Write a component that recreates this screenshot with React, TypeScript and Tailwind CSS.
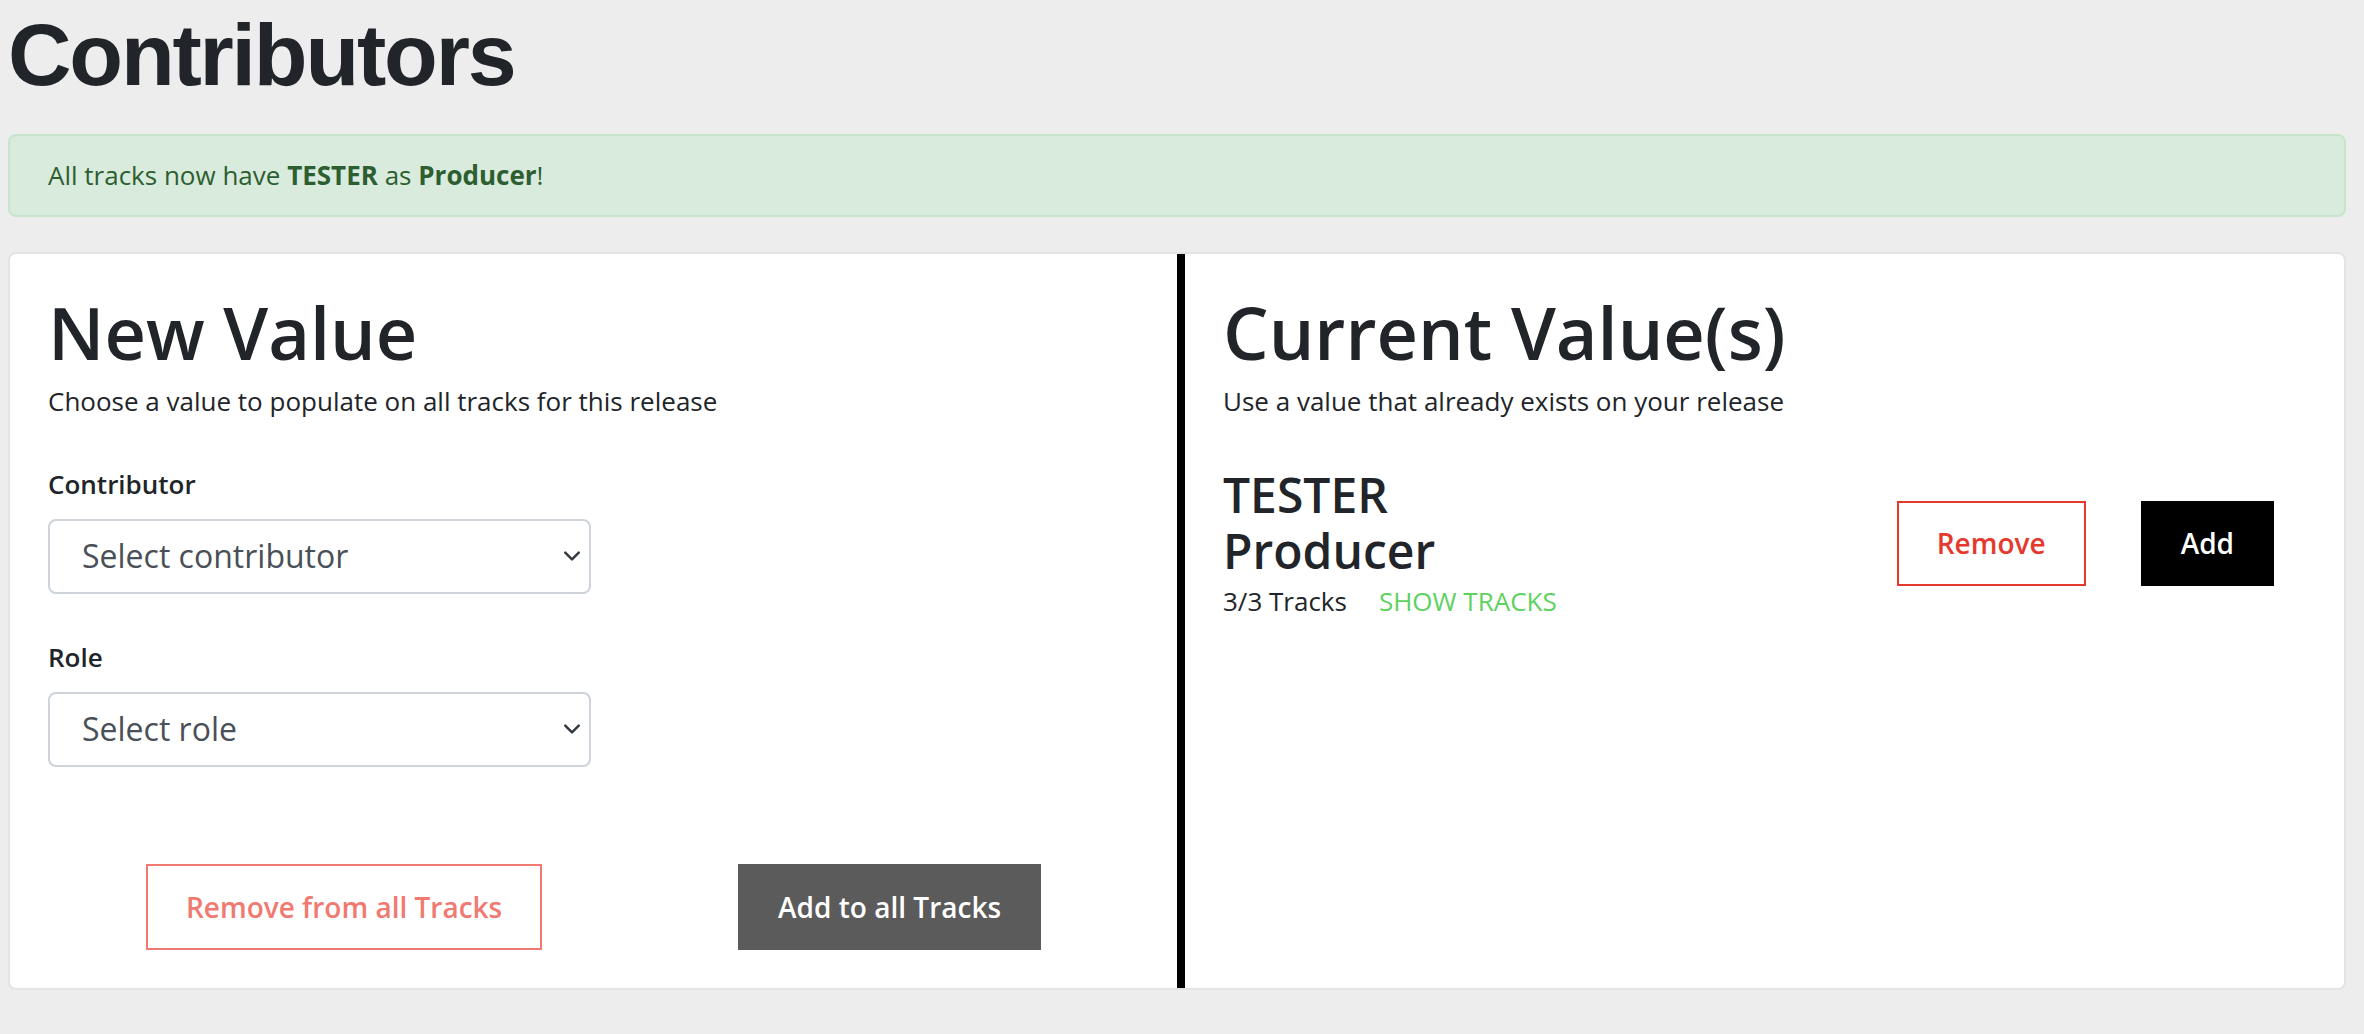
import React from 'react';

function Chevron() {
  return (
    <svg
      className="pointer-events-none absolute right-[10px] top-1/2 -translate-y-1/2"
      width="18"
      height="18"
      viewBox="0 0 16 16"
      fill="none"
    >
      <path d="M2 5l6 6 6-6" stroke="#343a40" strokeWidth="2.2" strokeLinecap="round" strokeLinejoin="round" />
    </svg>
  );
}

function SelectField({ label, placeholder }: { label: string; placeholder: string }) {
  return (
    <>
      <label className="block text-[26px] font-semibold leading-[39px]">{label}</label>
      <div className="relative mt-[15px] h-[75px] w-[543px]">
        <select
          defaultValue=""
          className="h-full w-full appearance-none rounded-[8px] border-2 border-[#ced4da] bg-white pl-[32px] text-[32px] text-[#495057] outline-none"
        >
          <option value="">{placeholder}</option>
        </select>
        <Chevron />
      </div>
    </>
  );
}

export default function App() {
  return (
    <div className="min-h-screen bg-[#ededed] pb-[44px] pl-[8px] pr-[18px] pt-[2px] font-['Open_Sans',sans-serif] text-[#212529]">
      <h1 className="font-['Liberation_Sans',Arial,sans-serif] text-[88px] font-bold leading-[1.2] tracking-[-0.025em]">
        Contributors
      </h1>

      {/* success banner */}
      <div className="mt-[26px] rounded-[8px] border-2 border-[#c9e4cc] bg-[#d9ebdc] px-[38px] py-[20px] text-[26px] leading-[39px] text-[#2d5e31]">
        All tracks now have <b className="font-bold">TESTER</b> as <b className="font-bold">Producer</b>!
      </div>

      <div className="mt-[35px] grid grid-cols-2 rounded-[8px] border-2 border-[#e3e3e3] bg-white">
        {/* New value */}
        <div className="flex flex-col px-[38px] pb-[38px] pt-[33px]">
          <h2 className="text-[72px] font-semibold leading-[90px]">New Value</h2>
          <p className="mt-[5px] text-[26px] leading-[39px]">Choose a value to populate on all tracks for this release</p>

          <div className="mt-[44px]">
            <SelectField label="Contributor" placeholder="Select contributor" />
          </div>
          <div className="mt-[44px]">
            <SelectField label="Role" placeholder="Select role" />
          </div>

          <div className="mt-[97px] flex justify-around">
            <button className="border-2 border-[#f07a72] bg-white px-[38px] py-[20px] text-[28px] font-semibold leading-[42px] text-[#f07a72]">
              Remove from all Tracks
            </button>
            <button className="border-2 border-[#5b5b5b] bg-[#5b5b5b] px-[38px] py-[20px] text-[28px] font-semibold leading-[42px] text-white">
              Add to all Tracks
            </button>
          </div>
        </div>

        {/* Current values */}
        <div className="border-l-[8px] border-black px-[38px] pt-[33px]">
          <h2 className="text-[72px] font-semibold leading-[90px]">Current Value(s)</h2>
          <p className="mt-[5px] text-[26px] leading-[39px]">Use a value that already exists on your release</p>

          <div className="mt-[46px] flex items-center justify-between">
            <div>
              <div className="text-[48px] font-semibold leading-[56px]">TESTER</div>
              <div className="text-[48px] font-semibold leading-[56px]">Producer</div>
              <div className="mt-[3px] text-[26px] leading-[39px]">
                3/3 Tracks
                <span className="ml-[32px] text-[#5ed15e]">SHOW TRACKS</span>
              </div>
            </div>
            <div className="mr-[32px] flex gap-[55px]">
              <button className="border-2 border-[#e5392e] bg-white px-[38px] py-[20px] text-[28px] font-semibold leading-[41px] text-[#e5392e]">
                Remove
              </button>
              <button className="border-2 border-black bg-black px-[38px] py-[20px] text-[28px] font-semibold leading-[41px] text-white">
                Add
              </button>
            </div>
          </div>
        </div>
      </div>
    </div>
  );
}
